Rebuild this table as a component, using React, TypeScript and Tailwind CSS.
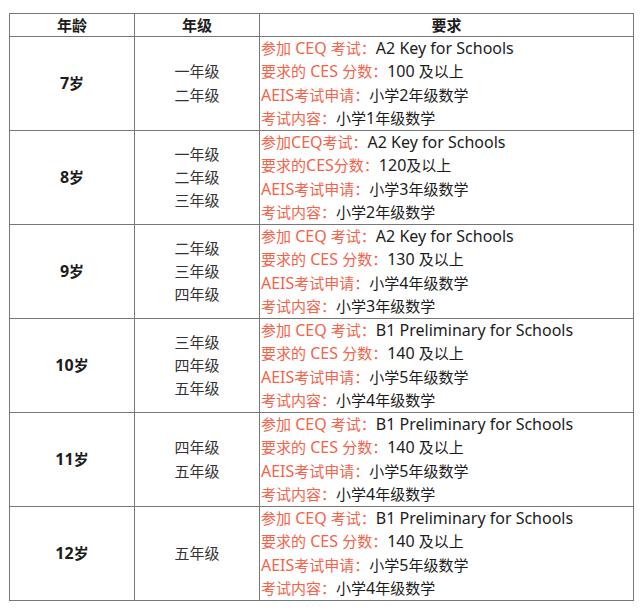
const rows = [
  {
    age: "7岁",
    grades: ["一年级", "二年级"],
    ceq: "参加 CEQ 考试：",
    ceqVal: "A2 Key for Schools",
    ces: "要求的 CES 分数：",
    cesVal: "100 及以上",
    aeis: "小学2年级数学",
    exam: "小学1年级数学",
  },
  {
    age: "8岁",
    grades: ["一年级", "二年级", "三年级"],
    ceq: "参加CEQ考试：",
    ceqVal: "A2 Key for Schools",
    ces: "要求的CES分数：",
    cesVal: "120及以上",
    aeis: "小学3年级数学",
    exam: "小学2年级数学",
  },
  {
    age: "9岁",
    grades: ["二年级", "三年级", "四年级"],
    ceq: "参加 CEQ 考试：",
    ceqVal: "A2 Key for Schools",
    ces: "要求的 CES 分数：",
    cesVal: "130 及以上",
    aeis: "小学4年级数学",
    exam: "小学3年级数学",
  },
  {
    age: "10岁",
    grades: ["三年级", "四年级", "五年级"],
    ceq: "参加 CEQ 考试：",
    ceqVal: "B1 Preliminary for Schools",
    ces: "要求的 CES 分数：",
    cesVal: "140 及以上",
    aeis: "小学5年级数学",
    exam: "小学4年级数学",
  },
  {
    age: "11岁",
    grades: ["四年级", "五年级"],
    ceq: "参加 CEQ 考试：",
    ceqVal: "B1 Preliminary for Schools",
    ces: "要求的 CES 分数：",
    cesVal: "140 及以上",
    aeis: "小学5年级数学",
    exam: "小学4年级数学",
  },
  {
    age: "12岁",
    grades: ["五年级"],
    ceq: "参加 CEQ 考试：",
    ceqVal: "B1 Preliminary for Schools",
    ces: "要求的 CES 分数：",
    cesVal: "140 及以上",
    aeis: "小学5年级数学",
    exam: "小学4年级数学",
  },
];

// latin runs render a touch larger, like the YaHei latin glyphs in the original
function Mixed({ text }: { text: string }) {
  const parts = text.split(/([A-Za-z0-9 ]+)/).filter(Boolean);
  return (
    <>
      {parts.map((p, i) =>
        /^[A-Za-z0-9 ]+$/.test(p) ? (
          <span key={i} className="text-[16px] leading-[23.25px]">
            {p}
          </span>
        ) : (
          <span key={i}>{p}</span>
        )
      )}
    </>
  );
}

function Line({ label, value }: { label: string; value: string }) {
  return (
    <div className="whitespace-nowrap h-[23.25px]">
      <span className="text-[#f4634a]">
        <Mixed text={label} />
      </span>
      <span>
        <Mixed text={value} />
      </span>
    </div>
  );
}

export default function App() {
  return (
    <div
      className="w-[640px] h-[610px] bg-white pt-[13px] pl-[9px] text-[15px] leading-[23.25px] text-[#1c1c1c]"
      style={{ fontFamily: '"Noto Sans", "Noto Sans CJK SC", sans-serif' }}
    >
      <table className="border-collapse table-fixed w-[624px]">
        <colgroup>
          <col className="w-[125px]" />
          <col className="w-[125px]" />
          <col className="w-[374px]" />
        </colgroup>
        <thead>
          <tr>
            <th className="border border-[#777] font-bold text-center p-0 h-[23px] leading-[22px]">年龄</th>
            <th className="border border-[#777] font-bold text-center p-0 h-[23px] leading-[22px]">年级</th>
            <th className="border border-[#777] font-bold text-center p-0 h-[23px] leading-[22px]">要求</th>
          </tr>
        </thead>
        <tbody>
          {rows.map((r) => (
            <tr key={r.age}>
              <td className="border border-[#777] text-center align-middle font-bold p-0">
                <Mixed text={r.age} />
              </td>
              <td className="border border-[#777] text-center align-middle p-0 text-[#333]">
                {r.grades.map((g) => (
                  <div key={g}>{g}</div>
                ))}
              </td>
              <td className="border border-[#777] align-top p-0 pl-px">
                <Line label={r.ceq} value={r.ceqVal} />
                <Line label={r.ces} value={r.cesVal} />
                <Line label="AEIS考试申请：" value={r.aeis} />
                <Line label="考试内容：" value={r.exam} />
              </td>
            </tr>
          ))}
        </tbody>
      </table>
    </div>
  );
}
